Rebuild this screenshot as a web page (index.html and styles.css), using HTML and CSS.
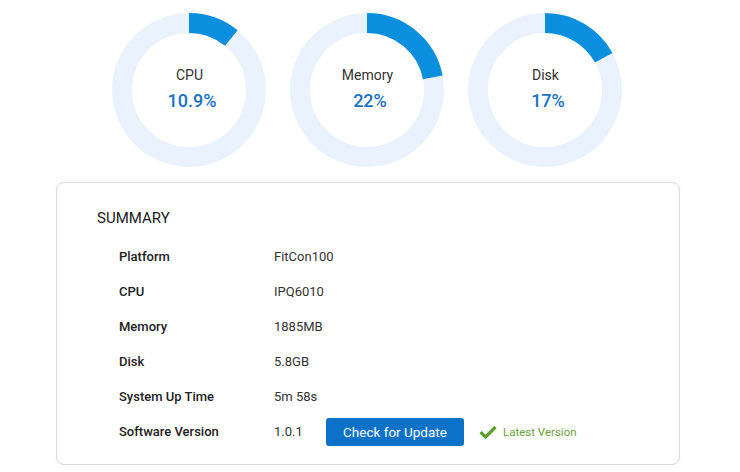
FILE: index.html
```html
<!DOCTYPE html>
<html>
<head>
<meta charset="utf-8">
<link rel="stylesheet" href="styles.css">
</head>
<body>
<div class="page">
  <div class="gauges">
    <div class="gauge">
      <svg class="ring" viewBox="0 0 154 154" width="154" height="154">
        <circle class="track" cx="77" cy="77" r="67"/>
        <circle class="bar" cx="77" cy="77" r="67" pathLength="100" stroke-dasharray="10.9 100" transform="rotate(-90 77 77)"/>
      </svg>
      <div class="gauge-text">
        <div class="gauge-label">CPU</div>
        <div class="gauge-value">10.9%</div>
      </div>
    </div>
    <div class="gauge">
      <svg class="ring" viewBox="0 0 154 154" width="154" height="154">
        <circle class="track" cx="77" cy="77" r="67"/>
        <circle class="bar" cx="77" cy="77" r="67" pathLength="100" stroke-dasharray="22 100" transform="rotate(-90 77 77)"/>
      </svg>
      <div class="gauge-text">
        <div class="gauge-label">Memory</div>
        <div class="gauge-value">22%</div>
      </div>
    </div>
    <div class="gauge">
      <svg class="ring" viewBox="0 0 154 154" width="154" height="154">
        <circle class="track" cx="77" cy="77" r="67"/>
        <circle class="bar" cx="77" cy="77" r="67" pathLength="100" stroke-dasharray="17 100" transform="rotate(-90 77 77)"/>
      </svg>
      <div class="gauge-text">
        <div class="gauge-label">Disk</div>
        <div class="gauge-value">17%</div>
      </div>
    </div>
  </div>

  <div class="card">
    <div class="card-title">SUMMARY</div>
    <div class="rows">
      <div class="row"><div class="label">Platform</div><div class="value">FitCon100</div></div>
      <div class="row"><div class="label">CPU</div><div class="value">IPQ6010</div></div>
      <div class="row"><div class="label">Memory</div><div class="value">1885MB</div></div>
      <div class="row"><div class="label">Disk</div><div class="value">5.8GB</div></div>
      <div class="row"><div class="label">System Up Time</div><div class="value">5m 58s</div></div>
      <div class="row">
        <div class="label">Software Version</div>
        <div class="value version">
          <span class="ver">1.0.1</span>
          <button class="btn">Check for Update</button>
          <span class="status">
            <svg class="check" viewBox="0 0 18 14" width="18" height="14"><path d="M1.5 7.2 L6.6 12 L16.5 2" fill="none" stroke="#5a9e2c" stroke-width="3.2" stroke-linecap="butt" stroke-linejoin="miter"/></svg>
            <span class="status-text">Latest Version</span>
          </span>
        </div>
      </div>
    </div>
  </div>
</div>
</body>
</html>
```

FILE: styles.css
```css
* { box-sizing: border-box; }
html, body {
  margin: 0;
  padding: 0;
  background: #ffffff;
  font-family: Roboto, "Liberation Sans", Arial, sans-serif;
  color: #333333;
}
.page {
  width: 740px;
  height: 472px;
  overflow: hidden;
}
.gauges {
  display: flex;
  gap: 24px;
  padding-left: 112px;
  padding-top: 13px;
}
.gauge {
  position: relative;
  width: 154px;
  height: 154px;
}
.ring { display: block; }
.track {
  fill: none;
  stroke: #eaf3fd;
  stroke-width: 20;
}
.bar {
  fill: none;
  stroke: #0a8fdf;
  stroke-width: 20;
}
.gauge-text {
  position: absolute;
  inset: 0;
  display: flex;
  flex-direction: column;
  align-items: center;
  padding-top: 53px;
  padding-left: 1px;
}
.gauge-label {
  font-size: 14px;
  line-height: 18px;
  color: #333333;
}
.gauge-value {
  margin-top: 6px;
  margin-left: 5px;
  font-size: 18px;
  line-height: 22px;
  color: #1a72c2;
  font-weight: 500;
}
.card {
  margin-top: 15px;
  margin-left: 56px;
  width: 624px;
  height: 283px;
  border: 1px solid #dadada;
  border-radius: 8px;
  padding: 25px 40px 14px 40px;
  box-shadow: 0 0 2px rgba(0,0,0,0.06);
}
.card-title {
  font-size: 15px;
  line-height: 20px;
  color: #1a1a1a;
  font-weight: 400;
}
.rows {
  margin-top: 11px;
  padding-left: 22px;
}
.row {
  display: flex;
  align-items: center;
  height: 35px;
  font-size: 13px;
}
.label {
  width: 155px;
  font-weight: 500;
  color: #222222;
}
.value {
  color: #333333;
}
.version {
  display: flex;
  align-items: center;
}
.ver {
  width: 52px;
}
.btn {
  width: 138px;
  height: 28px;
  border: none;
  border-radius: 3px;
  background: #0c72c7;
  color: #ffffff;
  font-family: Roboto, "Liberation Sans", Arial, sans-serif;
  font-size: 13.5px;
  padding: 0;
}
.status {
  display: flex;
  align-items: center;
  margin-left: 15px;
}
.check { display: block; }
.status-text {
  margin-left: 6px;
  font-size: 11.5px;
  color: #6aa33a;
}
```
